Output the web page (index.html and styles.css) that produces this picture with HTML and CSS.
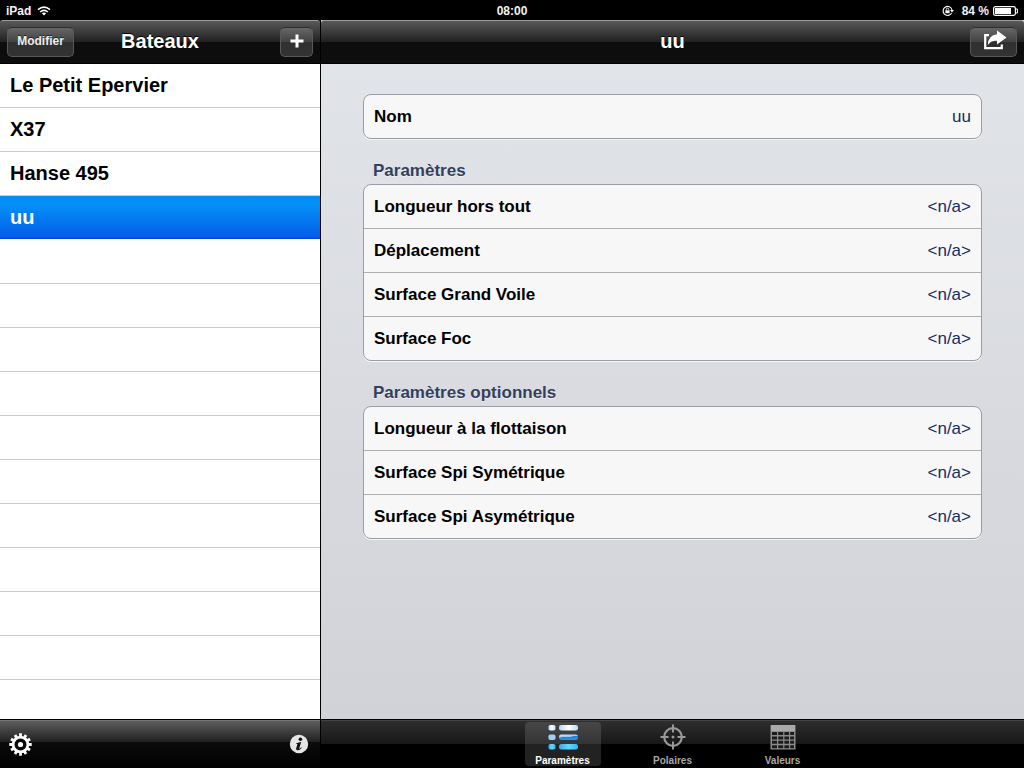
FILE: index.html
```html
<!DOCTYPE html>
<html lang="fr">
<head>
<meta charset="utf-8">
<meta name="viewport" content="width=device-width, initial-scale=1">
<title>Bateaux</title>
<link rel="stylesheet" href="styles.css">
</head>
<body>
<div class="app">
  <div class="status">
    <div class="status-side">
      <span>iPad</span>
      <svg width="14" height="10" viewBox="0 0 14 10" fill="none" stroke="#fff" stroke-width="1.6"><path d="M1 3.6Q7-1.4 13 3.6M3.2 6Q7 2.8 10.8 6"/><path d="M4.8 7.2Q7 5.6 9.2 7.2L7 9.6Z" fill="#fff" stroke="none"/></svg>
    </div>
    <span>08:00</span>
    <div class="status-side status-right">
      <svg width="12" height="12" viewBox="0 0 12 12" fill="none" stroke="#fff"><path d="M9.6 8A4.5 4.5 0 1 1 10 5" stroke-width="1.1"/><path d="M8 5h4L10 7.6Z" fill="#fff" stroke="none"/><path d="M3.4 5.4h4.2v2.8H3.4Z" fill="#fff" stroke="none"/><path d="M4.3 5.6V4.4a1.2 1.2 0 0 1 2.4 0v1.2" stroke-width=".9"/></svg>
      <span class="percent">84 %</span>
      <svg width="25" height="10" viewBox="0 0 25 10"><rect x=".6" y=".6" width="21.8" height="8.8" rx="1.8" fill="none" stroke="#fff" stroke-width="1.2"/><rect x="2" y="2" width="16" height="6" fill="#fff"/><path d="M23 3h1.4v4H23" fill="none" stroke="#fff"/></svg>
    </div>
  </div>

  <div class="split">
    <aside class="sidebar">
      <header class="bar">
        <button class="bar-btn edit" type="button">Modifier</button>
        <h1 class="bar-title">Bateaux</h1>
        <div class="bar-end">
          <button class="bar-btn add" type="button" aria-label="Ajouter"><svg width="14" height="14" viewBox="0 0 14 14"><path d="M7 .5v13M.5 7h13" stroke="#fff" stroke-width="3"/></svg></button>
        </div>
      </header>
      <ul class="boats">
        <li><a href="#">Le Petit Epervier</a></li>
        <li><a href="#">X37</a></li>
        <li><a href="#">Hanse 495</a></li>
        <li class="selected"><a href="#" aria-current="true">uu</a></li>
      </ul>
      <footer class="toolbar">
        <button class="icon-btn" type="button" aria-label="Réglages"><svg width="23" height="23" viewBox="-11.5 -11.5 23 23"><g stroke="#fff" stroke-width="2.8"><path d="M0-11.2V11.2M-11.2 0H11.2"/><path d="M0-11V11M-11 0H11" transform="rotate(30)"/><path d="M0-11V11M-11 0H11" transform="rotate(60)"/></g><circle r="7.4" fill="#0b0b0b" stroke="#fff" stroke-width="2.8"/><circle r="2.6" fill="#fff"/></svg></button>
        <button class="icon-btn" type="button" aria-label="Informations"><svg width="20" height="20" viewBox="0 0 20 20"><circle cx="10" cy="10" r="9.2" fill="#e6e6e6"/><circle cx="11.4" cy="5.2" r="1.8" fill="#111"/><path d="M7.2 9.2Q9.8 8.6 12.2 8L10.3 14.2Q10.1 15.1 11 14.5L12.3 13.3 12.8 13.8Q10.6 16.6 8.4 16.3 6.7 16 7.2 14.2L8.5 9.9 7.2 9.8Z" fill="#111"/></svg></button>
      </footer>
    </aside>

    <main class="detail">
      <header class="bar">
        <h2 class="bar-title">uu</h2>
        <div class="bar-end">
          <button class="bar-btn share" type="button" aria-label="Partager"><svg width="26" height="22" viewBox="0 0 26 22"><path d="M8 5.2H4.2V18.2H20.8V14.5" fill="none" stroke="#fff" stroke-width="2.2"/><path d="M16 .5L25.500 7.500 16 14.500V10.800Q10 10.200 6.800 15 7 5.400 16 4.300Z" fill="#fff"/></svg></button>
        </div>
      </header>
      <div class="content">
        <dl class="card">
          <div class="row"><dt>Nom</dt><dd>uu</dd></div>
        </dl>
        <h3 class="section">Paramètres</h3>
        <dl class="card">
          <div class="row"><dt>Longueur hors tout</dt><dd>&lt;n/a&gt;</dd></div>
          <div class="row"><dt>Déplacement</dt><dd>&lt;n/a&gt;</dd></div>
          <div class="row"><dt>Surface Grand Voile</dt><dd>&lt;n/a&gt;</dd></div>
          <div class="row"><dt>Surface Foc</dt><dd>&lt;n/a&gt;</dd></div>
        </dl>
        <h3 class="section">Paramètres optionnels</h3>
        <dl class="card">
          <div class="row"><dt>Longueur à la flottaison</dt><dd>&lt;n/a&gt;</dd></div>
          <div class="row"><dt>Surface Spi Symétrique</dt><dd>&lt;n/a&gt;</dd></div>
          <div class="row"><dt>Surface Spi Asymétrique</dt><dd>&lt;n/a&gt;</dd></div>
        </dl>
      </div>
      <nav class="tabs">
        <button class="tab active" type="button">
          <svg width="32" height="29" viewBox="0 0 32 29">
            <defs>
              <linearGradient id="ice" x1="0" x2="1"><stop offset="0" stop-color="#b9d3f5"/><stop offset=".5" stop-color="#fff"/><stop offset="1" stop-color="#b9dcfa"/></linearGradient>
              <linearGradient id="mid" x1="0" y1="0" x2=".3" y2="1"><stop offset="0" stop-color="#d5ecff"/><stop offset=".5" stop-color="#8cc6f8"/><stop offset=".55" stop-color="#1d7fdc"/><stop offset="1" stop-color="#2a93e8"/></linearGradient>
              <linearGradient id="aqua" x1="0" x2="1"><stop offset="0" stop-color="#3da6e8"/><stop offset=".5" stop-color="#62d8ff"/><stop offset="1" stop-color="#32b4ef"/></linearGradient>
            </defs>
            <rect x="1.500" y="3" width="7" height="5.500" rx="1.8" fill="url(#ice)"/><rect x="12" y="3" width="19" height="5.500" rx="2.200" fill="url(#ice)"/>
            <rect x="1.500" y="12.500" width="7" height="5.500" rx="1.8" fill="#a3cdf6"/><rect x="12" y="12.500" width="19" height="5.500" rx="2.200" fill="url(#mid)"/>
            <rect x="1.500" y="22" width="7" height="5.500" rx="1.8" fill="url(#aqua)"/><rect x="12" y="22" width="19" height="5.500" rx="2.200" fill="url(#aqua)"/>
          </svg>
          <span>Paramètres</span>
        </button>
        <button class="tab" type="button">
          <svg width="28" height="29" viewBox="-14 -15 28 29" fill="none" stroke="#999"><circle r="8.8" stroke-width="2.2"/><path d="M0-12.5V-4.5M0 12.5V4.5M-12.5 0H-4.5M12.5 0H4.5" stroke-width="2"/><circle r="1.5" fill="#999" stroke="none"/></svg>
          <span>Polaires</span>
        </button>
        <button class="tab" type="button">
          <svg width="28" height="29" viewBox="0 -1 28 29"><rect x="1.5" y="2" width="25" height="24.5" fill="#8c8c8c"/><rect x="2" y="2" width="24" height="6" fill="#aaa"/><path d="M3 9h5v3H3zM9.200 9h5v3h-5zM15.400 9h4.600v3h-4.600zM21.200 9h3.800v3h-3.800zM3 13.400h5v3H3zM9.200 13.400h5v3h-5zM15.400 13.400h4.600v3h-4.600zM21.200 13.400h3.800v3h-3.800zM3 17.800h5v3H3zM9.200 17.800h5v3h-5zM15.400 17.800h4.600v3h-4.600zM21.200 17.800h3.800v3h-3.800zM3 22.200h5v3H3zM9.200 22.200h5v3h-5zM15.400 22.200h4.600v3h-4.600zM21.200 22.200h3.800v3h-3.800z" fill="#1c1c1c"/></svg>
          <span>Valeurs</span>
        </button>
      </nav>
    </main>
  </div>
</div>
</body>
</html>
```

FILE: styles.css
```css
* { box-sizing: border-box; }

body {
  margin: 0;
  background: #000;
  font-family: "Liberation Sans", Arial, Helvetica, sans-serif;
}

h1, h2, h3, ul, dl, dd { margin: 0; padding: 0; }

button {
  border: 0;
  padding: 0;
  background: none;
  color: #fff;
  font: inherit;
}

svg { display: block; flex: none; }

.app {
  display: flex;
  flex-direction: column;
  min-height: 100vh;
}

.status {
  display: grid;
  grid-template-columns: 1fr auto 1fr;
  align-items: center;
  height: 20px;
  padding: 2px 6px 0 6px;
  color: #f2f2f2;
  font-size: 12px;
  font-weight: bold;
  line-height: 16px;
}

.status-side { display: flex; align-items: center; gap: 6px; }
.status-right { justify-content: flex-end; gap: 4px; }
.percent { margin-left: 4px; }

.split {
  flex: 1;
  display: grid;
  grid-template-columns: 321px 1fr;
}

.sidebar {
  display: flex;
  flex-direction: column;
  border-right: 1px solid #000;
}

.detail {
  display: flex;
  flex-direction: column;
  min-width: 0;
  background: linear-gradient(#e2e5ea, #d0d1d6);
}

.bar {
  display: grid;
  grid-template-columns: 1fr auto 1fr;
  align-items: center;
  height: 44px;
  padding: 0 7px;
  border-top: 1px solid #9a9a9a;
  border-bottom: 1px solid #000;
  border-radius: 3px 3px 0 0;
  background: linear-gradient(#595959, #202020 50%, #0d0d0d 50%, #0d0d0d);
  color: #fff;
}

.bar-title {
  grid-column: 2;
  padding-bottom: 2px;
  font-size: 20px;
  line-height: 24px;
  text-shadow: 0 -1px 0 #000;
}

.bar-end { display: flex; justify-content: flex-end; }

.bar-btn {
  display: flex;
  align-items: center;
  justify-content: center;
  height: 30px;
  padding-bottom: 2px;
  border: 1px solid #585858;
  border-top-color: #303030;
  border-radius: 5px;
  background: linear-gradient(#666, #424242 50%, #303030 50%, #333);
}

.edit {
  justify-self: start;
  width: 67px;
  color: #eee;
  font-size: 12px;
  font-weight: bold;
  text-shadow: 0 -1px 0 #222;
}

.add { width: 33px; }
.share { width: 47px; }

.boats {
  flex: 1;
  list-style: none;
  background: repeating-linear-gradient(#fff 0 43px, #cbcbcb 43px 44px);
}

.boats a {
  display: block;
  height: 44px;
  padding: 0 10px;
  color: #000;
  font-size: 20px;
  font-weight: bold;
  line-height: 42px;
  text-decoration: none;
}

.selected a {
  border-bottom: 1px solid #fff;
  background: linear-gradient(#058cf5, #0690f8 20%, #015de6 97%, #0046d8 97%);
  color: #fff;
}

.toolbar {
  display: flex;
  align-items: center;
  justify-content: space-between;
  height: 49px;
  padding: 0 11px 0 9px;
  border-top: 1px solid #000;
  box-shadow: inset 0 1px 0 #777;
  background: linear-gradient(#606060, #202020 46%, #0c0c0c 46%, #000);
}

.content {
  flex: 1;
  padding: 30px 42px;
}

.card {
  border: 1px solid #9b9da5;
  border-radius: 8px;
  background: #f7f7f7;
  box-shadow: 0 1px 0 #f4f5f7;
}

.row {
  display: flex;
  align-items: center;
  justify-content: space-between;
  height: 44px;
  padding: 0 10px;
  border-bottom: 1px solid #adafb3;
  font-size: 17px;
  line-height: 20px;
}

.row:last-child { height: 43px; border-bottom: 0; }
.row dt { font-weight: bold; }
.row dd { color: #142c69; }

.section {
  height: 45px;
  padding: 22px 10px 0;
  color: #343f5b;
  font-size: 17px;
  line-height: 20px;
  text-shadow: 0 1px 0 #eef0f4;
}

.tabs {
  display: flex;
  justify-content: center;
  gap: 34px;
  height: 49px;
  padding: 2px 0;
  border-top: 1px solid #000;
  box-shadow: inset 0 1px 0 #444;
  background: linear-gradient(#2f2f2f, #171717 50%, #000 50%, #000);
}

.tab {
  display: flex;
  flex-direction: column;
  align-items: center;
  width: 76px;
  border-radius: 4px;
  color: #a8a8a8;
  font-size: 10px;
  font-weight: bold;
  line-height: 12px;
}

.tab span { margin-top: 4px; }

.active {
  background: linear-gradient(#474747, #343434 50%, #222 50%, #222);
  color: #fff;
}
```
